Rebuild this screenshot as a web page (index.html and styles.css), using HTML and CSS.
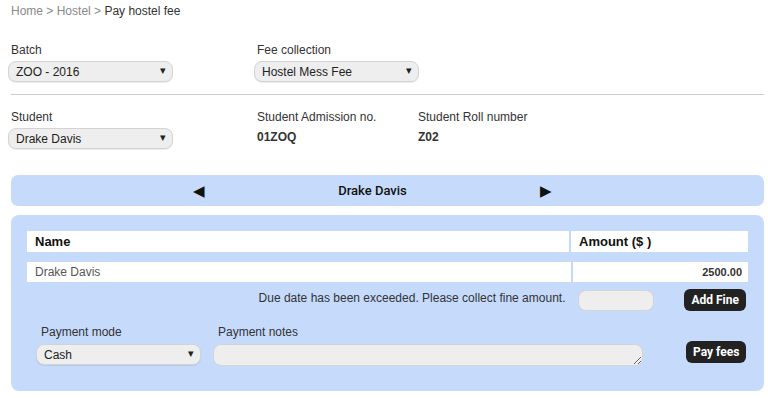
FILE: index.html
```html
<!DOCTYPE html>
<html lang="en">
<head>
    <meta charset="UTF-8">
    <title>Pay hostel fee</title>
    <link rel="stylesheet" href="styles.css">
</head>
<body>
    <div class="page">
        <div class="breadcrumb">
            <span class="crumb">Home</span> &gt; <span class="crumb">Hostel</span> &gt; <span class="current">Pay hostel fee</span>
        </div>

        <div class="row row-top">
            <div class="field col-wide">
                <label>Batch</label>
                <div class="select-wrap">
                    <select><option>ZOO - 2016</option></select>
                </div>
            </div>
            <div class="field col-wide">
                <label>Fee collection</label>
                <div class="select-wrap">
                    <select><option>Hostel Mess Fee</option></select>
                </div>
            </div>
        </div>

        <hr class="divider">

        <div class="row row-student">
            <div class="field col-wide">
                <label>Student</label>
                <div class="select-wrap">
                    <select><option>Drake Davis</option></select>
                </div>
            </div>
            <div class="field col-info">
                <label>Student Admission no.</label>
                <div class="value">01ZOQ</div>
            </div>
            <div class="field col-info">
                <label>Student Roll number</label>
                <div class="value">Z02</div>
            </div>
        </div>

        <div class="student-bar">
            <span class="arrow">&#9664;</span>
            <span class="bar-name">Drake Davis</span>
            <span class="arrow">&#9654;</span>
        </div>

        <div class="panel">
            <div class="fee-table">
                <div class="fee-row head">
                    <div class="cell name">Name</div>
                    <div class="cell amount">Amount ($ )</div>
                </div>
                <div class="fee-row">
                    <div class="cell name">Drake Davis</div>
                    <div class="cell amount num">2500.00</div>
                </div>
            </div>

            <div class="fine-row">
                <span class="fine-msg">Due date has been exceeded. Please collect fine amount.</span>
                <input class="fine-input" type="text">
                <button class="btn">Add Fine</button>
            </div>

            <div class="pay-row">
                <div class="field pay-mode">
                    <label>Payment mode</label>
                    <div class="select-wrap">
                        <select><option>Cash</option></select>
                    </div>
                </div>
                <div class="field pay-notes">
                    <label>Payment notes</label>
                    <textarea></textarea>
                </div>
                <button class="btn pay-btn">Pay fees</button>
            </div>
        </div>
    </div>
</body>
</html>
```

FILE: styles.css
```css
body {
    margin: 0;
    font-family: "Liberation Sans", Arial, sans-serif;
    font-size: 12px;
    color: #333;
    background: #fff;
}

.page {
    padding: 4px 4px 0 11px;
}

.breadcrumb {
    color: #888;
    font-size: 12px;
    line-height: 14px;
}

.breadcrumb .current {
    color: #333;
}

.row {
    display: flex;
}

.row-top {
    margin-top: 25px;
}

.field label {
    display: block;
    line-height: 14px;
    margin-bottom: 4px;
}

.col-wide {
    width: 246px;
}

.col-info {
    width: 161px;
}

.select-wrap {
    position: relative;
    width: 165px;
    margin-left: -3px;
}

.select-wrap::after {
    content: "\25BE";
    position: absolute;
    right: 7px;
    top: 3px;
    font-size: 11px;
    color: #222;
    pointer-events: none;
}

select {
    appearance: none;
    -webkit-appearance: none;
    width: 100%;
    height: 21px;
    padding: 0 7px;
    font-family: "Liberation Sans", Arial, sans-serif;
    font-size: 12px;
    color: #222;
    background: #eee;
    border: 1px solid #d4d4d4;
    border-radius: 8px;
    box-shadow: 0 1px 1px rgba(0, 0, 0, 0.08);
}

.divider {
    border: 0;
    border-top: 1px solid #ccc;
    margin: 12px 0 0;
}

.row-student {
    margin-top: 15px;
}

.row-student .col-info label {
    margin-bottom: 6px;
}

.value {
    font-weight: bold;
    line-height: 14px;
}

.student-bar {
    margin-top: 26px;
    height: 31px;
    background: #c6dafc;
    border-radius: 7px;
    display: flex;
    align-items: center;
    padding-left: 182px;
}

.arrow {
    font-size: 15px;
    color: #111;
}

.bar-name {
    font-family: Roboto, "Liberation Sans", sans-serif;
    font-weight: 500;
    font-size: 13px;
    color: #111;
    width: 335px;
    text-align: center;
}

.panel {
    margin-top: 9px;
    background: #c6dafc;
    border-radius: 8px;
    padding: 16px 16px 0;
    height: 160px;
}

.fee-row {
    display: flex;
    gap: 2px;
}

.fee-row + .fee-row {
    margin-top: 10px;
}

.cell {
    background: #fff;
    height: 20px;
    line-height: 20px;
    padding: 0 8px;
}

.cell.name {
    flex: 1;
}

.cell.amount {
    width: 161px;
}

.head .cell {
    height: 21px;
    line-height: 21px;
    font-weight: bold;
    font-size: 13px;
    color: #111;
}

.fee-row .cell.name {
    color: #555;
}

.head .cell.name {
    color: #111;
}

.cell.num {
    text-align: right;
    font-weight: bold;
    font-size: 11px;
    padding-right: 6px;
}

.fine-row {
    display: flex;
    align-items: center;
    justify-content: flex-end;
    margin-top: 7px;
    padding-right: 2px;
}

.fine-msg {
    margin-right: 13px;
    margin-bottom: 4px;
}

.fine-input {
    width: 76px;
    height: 21px;
    box-sizing: border-box;
    background: #eee;
    border: 1px solid #d4d4d4;
    border-radius: 8px;
    margin-right: 30px;
}

.btn {
    background: #222;
    color: #fff;
    border: 0;
    border-radius: 6px;
    font-family: Roboto, "Liberation Sans", sans-serif;
    font-weight: bold;
    font-size: 12px;
    height: 22px;
    padding: 0 7px;
}

.pay-row {
    display: flex;
    align-items: flex-start;
    margin-top: 14px;
    padding-left: 9px;
}

.pay-row .field label {
    margin-left: 5px;
    margin-bottom: 5px;
}

.pay-mode .select-wrap {
    margin-left: 0;
}

.pay-mode {
    width: 177px;
}

.pay-notes textarea {
    display: block;
    width: 430px;
    height: 22px;
    box-sizing: border-box;
    background: #eee;
    border: 1px solid #d4d4d4;
    border-radius: 8px;
    resize: vertical;
}

.pay-btn {
    margin-left: 43px;
    margin-top: 16px;
}
```
